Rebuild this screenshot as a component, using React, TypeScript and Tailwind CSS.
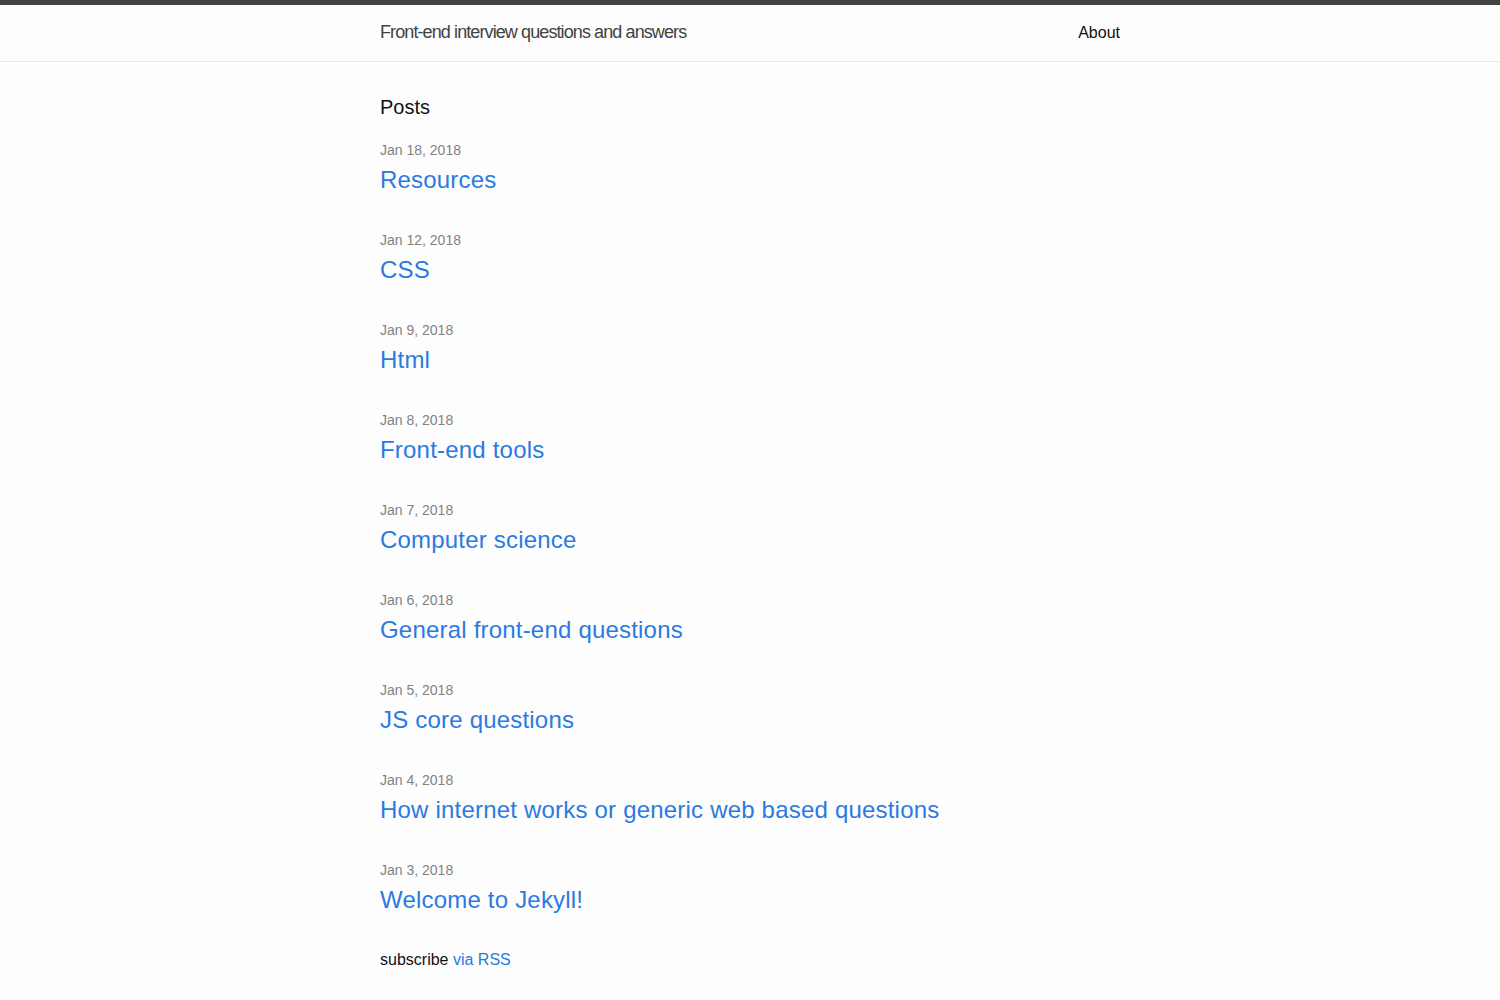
const POSTS = [
  { date: 'Jan 18, 2018', title: 'Resources' },
  { date: 'Jan 12, 2018', title: 'CSS' },
  { date: 'Jan 9, 2018', title: 'Html' },
  { date: 'Jan 8, 2018', title: 'Front-end tools' },
  { date: 'Jan 7, 2018', title: 'Computer science' },
  { date: 'Jan 6, 2018', title: 'General front-end questions' },
  { date: 'Jan 5, 2018', title: 'JS core questions' },
  { date: 'Jan 4, 2018', title: 'How internet works or generic web based questions' },
  { date: 'Jan 3, 2018', title: 'Welcome to Jekyll!' },
]

export default function App() {
  return (
    <div className="min-h-[1000px] bg-[#fdfdfd] text-[#111] font-['Liberation_Sans',Arial,sans-serif]">
      {/* шапка */}
      <header className="border-t-[5px] border-[#424242] border-b border-b-[#e8e8e8]">
        <div className="mx-auto max-w-[740px] flex justify-between items-center h-[56px] pb-[2px]">
          <a href="#" className="text-[18px] tracking-[-0.9px] text-[#424242]">
            Front-end interview questions and answers
          </a>
          <nav className="pt-[2px]">
            <a href="#" className="text-[16px] text-[#111]">
              About
            </a>
          </nav>
        </div>
      </header>

      <main className="mx-auto max-w-[740px] pt-[30px]">
        <h2 className="text-[20px] leading-[30px] mb-[18px]">Posts</h2>
        <ul className="flex flex-col gap-[32px]">
          {POSTS.map((post) => (
            <li key={post.title}>
              <span className="block text-[14px] leading-[21px] text-[#828282]">{post.date}</span>
              <a href="#" className="block mt-[1px] text-[24px] leading-[36px] tracking-[0.2px] text-[#2a7ae2]">
                {post.title}
              </a>
            </li>
          ))}
        </ul>
        <p className="mt-[30px] text-[16px] leading-[24px]">
          subscribe <a href="#" className="text-[#2a7ae2]">via RSS</a>
        </p>
      </main>
    </div>
  )
}
